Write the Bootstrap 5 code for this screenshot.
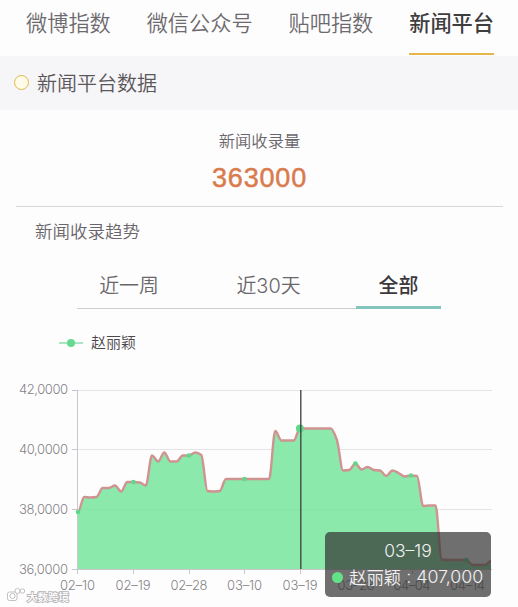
<!DOCTYPE html>
<html lang="zh-CN">
<head>
<meta charset="utf-8">
<meta name="viewport" content="width=device-width, initial-scale=1">
<title>新闻平台</title>
<link href="https://cdn.jsdelivr.net/npm/bootstrap@5.3.0/dist/css/bootstrap.min.css" rel="stylesheet">
<style>
body{font-family:"Liberation Sans","Noto Sans CJK SC",sans-serif;background:#fefdfe;color:#68666a;overflow:hidden}
.cn{font-family:"Noto Sans CJK SC",sans-serif;font-weight:350}
.top-tabs{height:56px;padding:0 24px 0 26px}
.top-tabs .nav-link{height:55px;padding:0;line-height:43px;font-size:21.2px;color:#6c6a6d;border-bottom:2px solid transparent;white-space:nowrap}
.top-tabs .nav-link.active{color:#3f3d40;font-weight:500;border-color:#e6b54b}
.section-bar{height:54px;background:#f6f5f7;padding:0 0 1px 14px;font-size:20px;color:#59575a}
.ring{width:15px;height:15px;border:1.6px solid #dfb94f;border-radius:50%;background:#fffbe9;margin-right:8px}
.summary{height:97px;margin:0 15px 0 16px;border-bottom:1px solid #d8d6da;padding-top:18px}
.summary-name{font-size:16.3px;line-height:24px}
.summary-value{font:400 27px/30px "Liberation Sans",sans-serif;letter-spacing:.8px;-webkit-text-stroke:.5px #d97b4d;color:#d97b4d;margin-top:11px}
.trend-name{height:49px;line-height:48px;padding-left:35px;font-size:17.5px}
.range-tabs{height:53px;width:364px;margin-left:77px}
.range-tabs .nav-link{height:53px;padding:0;line-height:57px;font-size:19.9px;color:#69676a;border-bottom:1px solid #cfcdd0;text-align:center}
.range-tabs .nav-link.active{border-bottom:3px solid #83c5bd;color:#3b393c;font-weight:500}
.r1{width:104px}.r2{width:175px}.r3{width:85px}
.legend-row{height:61px;padding:6px 0 0 59px;font-size:15px;color:#4a484b}
.chart{height:237px}
.chart svg{display:block}
.tip{left:325px;top:162px;width:166px;height:65px;border-radius:5px;background:rgba(50,50,50,.7);color:#f1f1f1;padding-top:6px}
.tip-date,.num{font-family:Inter,sans-serif;font-weight:300}
.tip-date{font-size:17.5px;line-height:26px}
.tip-row{height:27px;padding-left:7px;font-size:17.4px;white-space:nowrap}
.tip-row .num{font-size:17.8px}
.tip-dot{width:11px;height:11px;border-radius:50%;background:#64e288;margin-right:6px}
</style>
<script src="https://cdn.jsdelivr.net/npm/bootstrap@5.3.0/dist/js/bootstrap.bundle.min.js"></script>
</head>
<body class="cn">
<nav class="nav top-tabs flex-nowrap justify-content-between">
  <a class="nav-link">微博指数</a><a class="nav-link">微信公众号</a><a class="nav-link">贴吧指数</a><a class="nav-link active">新闻平台</a>
</nav>
<div class="section-bar d-flex align-items-center"><span class="ring"></span><span>新闻平台数据</span></div>
<section class="summary text-center">
  <div class="summary-name">新闻收录量</div>
  <div class="summary-value">363000</div>
</section>
<div class="trend-name">新闻收录趋势</div>
<nav class="nav range-tabs flex-nowrap">
  <a class="nav-link r1">近一周</a><a class="nav-link r2">近<span class="num">30</span>天</a><a class="nav-link r3 active">全部</a>
</nav>
<div class="legend-row d-flex align-items-center">
  <svg width="24" height="10" class="me-2"><path d="M0 5H24" stroke="#8bdcab" stroke-width="1.5"/><circle cx="12" cy="5" r="4" fill="#66d990"/></svg>
  <span>赵丽颖</span>
</div>
<div class="chart position-relative">
  <svg width="518" height="237" viewBox="0 370 518 237">
    <g stroke="#e6e4e7"><path d="M78 390.5H492M78 449.5H492M78 509.5H492"/></g>
    <path id="area" fill="#8ae9ab"/>
    <path d="M78 509.5H430" stroke="#82e0a3" opacity=".5"/>
    <path d="M77.5 390V570M72 390.5h6M72 449.5h6M72 509.5h6M72 569.5H492M77.5 570v4M133.5 570v4M189.5 570v4M244.5 570v4M300.5 570v4M356.5 570v4M412.5 570v4M467.5 570v4" fill="none" stroke="#c9c7cb"/>
    <path id="line" fill="none" stroke="#cf9491" stroke-width="2.4" stroke-linejoin="round"/>
    <g id="dots" fill="#5fd88a"></g>
    <path d="M300.8 390V569" stroke="#444b47" stroke-width="1.4"/>
    <g font-family="Inter,sans-serif" font-weight="300" font-size="13" fill="#858386">
      <g text-anchor="end">
        <text x="68" y="394" textLength="49">42,0000</text><text x="68" y="453.500" textLength="49">40,0000</text><text x="68" y="513.500" textLength="49">38,0000</text><text x="68" y="573.500" textLength="49">36,0000</text>
      </g>
      <g text-anchor="middle">
        <text x="77.500" y="589.500" textLength="35">02–10</text><text x="133" y="589.500" textLength="35">02–19</text><text x="189" y="589.500" textLength="37">02–28</text><text x="244.500" y="589.500" textLength="35">03–10</text><text x="300" y="589.500" textLength="35">03–19</text><text x="356" y="589.500" textLength="37">03–28</text><text x="412" y="589.500" textLength="37">04–04</text><text x="467.500" y="589.500" textLength="35">04–14</text>
      </g>
    </g>
    <g fill="#fff" stroke="#bbb9bc" stroke-width=".9">
      <rect x="7.500" y="592" width="9.500" height="8.500" rx="2"/>
      <circle cx="12.500" cy="596" r="2.600"/><circle cx="17.500" cy="591" r="2.500"/><circle cx="22.500" cy="591" r="2.200"/>
      <text x="27" y="600.500" font-size="10.500" font-family="Noto Sans CJK SC,sans-serif" font-weight="500" textLength="42" paint-order="stroke" stroke-width="1.800">大数跨境</text>
    </g>
  </svg>
  <div class="tip position-absolute">
    <div class="tip-date text-center">03–19</div>
    <div class="tip-row d-flex align-items-center"><span class="tip-dot"></span><span>赵丽颖</span><span class="num">&nbsp;:&nbsp;</span><span class="num">407,000</span></div>
  </div>
</div>
<script>
const ys=[512,497,497.5,497,488,488,485.5,491.5,482,482,482.5,485.5,455.5,461.5,452.5,461.5,461.5,455.5,455.5,452.5,455,491,491.5,491,479,479,479,479,479,479,479,479,431,440.5,440.5,440.5,428.5,428.5,428.5,428.5,428.5,428.5,440,470.5,470,463.5,469.5,467,470,470.5,476,470.5,473,476.5,475.5,476,506,505.5,505.5,559.5,560,560,560,560,565,565,565,561];
const step=(491-78)/(ys.length-1), xs=ys.map((_,i)=>78+i*step);
const m=ys.map((y,i)=>{
  if(i===0||i===ys.length-1) return 0;
  const a=y-ys[i-1], b=ys[i+1]-y;
  return a*b<=0?0:2*a*b/(a+b);
});
let d=`M${xs[0]} ${ys[0]}`;
for(let i=1;i<ys.length;i++)
  d+=`C${xs[i-1]+step/3} ${ys[i-1]+m[i-1]/3} ${xs[i]-step/3} ${ys[i]-m[i]/3} ${xs[i]} ${ys[i]}`;
document.getElementById('line').setAttribute('d',d);
document.getElementById('area').setAttribute('d',d+'V569H78Z');
document.getElementById('dots').innerHTML=[0,9,18,27,36,45,54,63].map(i=>`<circle cx="${xs[i]}" cy="${ys[i]}" r="${i===36?4:2.3}"/>`).join('');
</script>
</body>
</html>
